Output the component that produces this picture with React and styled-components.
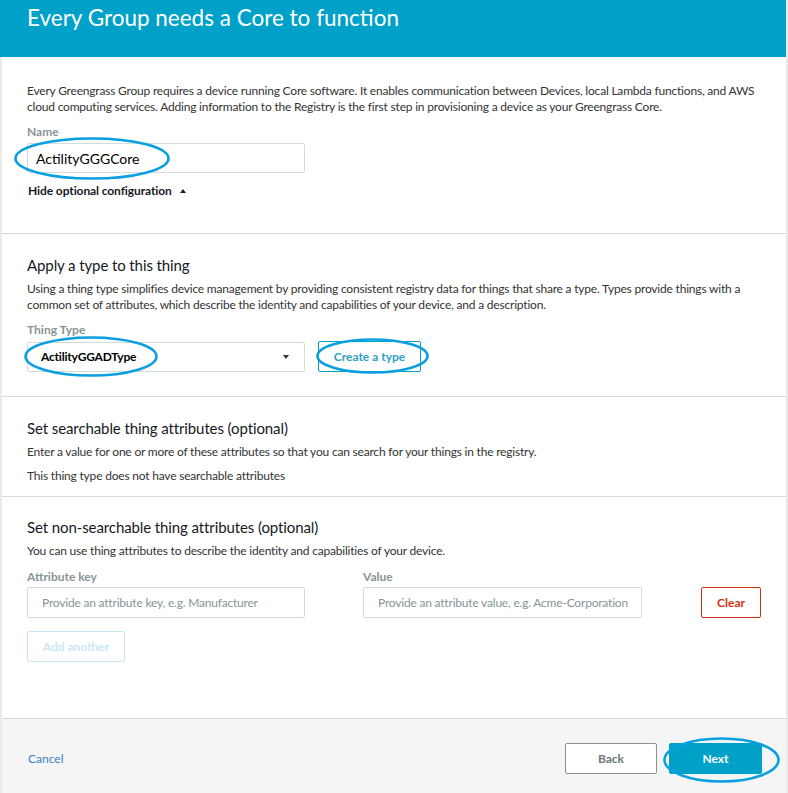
import styled, { createGlobalStyle } from "styled-components";

const GlobalStyle = createGlobalStyle`
  body {
    margin: 0;
    background: #ffffff;
    font-family: Lato, "Open Sans", Arial, sans-serif;
    color: #333333;
  }
  * {
    box-sizing: border-box;
  }
`;

const Page = styled.div`
  width: 788px;
  height: 793px;
  display: flex;
  flex-direction: column;
  border-right: 2px solid #e9ebeb;
  overflow: hidden;
`;

const Header = styled.header`
  height: 57px;
  flex-shrink: 0;
  background: #00a1c9;
  color: #ffffff;
  padding: 4px 0 0 27px;
  font-size: 22.5px;
  line-height: 28px;
`;

const Body = styled.main`
  flex: 1;
  display: flex;
  flex-direction: column;
  border-left: 2px solid #e9ebeb;
`;

const Section = styled.section`
  height: ${(p) => p.$height}px;
  flex-shrink: 0;
  padding: ${(p) => p.$top}px 25px 0 25px;
  border-bottom: 1px solid #d5dbdb;
`;

const Title = styled.h2`
  margin: 0;
  font-size: 15px;
  line-height: 20px;
  font-weight: 400;
  letter-spacing: -0.1px;
  color: #16191f;
`;

const Text = styled.p`
  margin: ${(p) => p.$mt || 0}px 0 0;
  font-size: 12px;
  line-height: 16px;
  letter-spacing: -0.2px;
  color: #333333;
`;

const Label = styled.div`
  margin-top: ${(p) => p.$mt || 0}px;
  font-size: 12px;
  line-height: 16px;
  font-weight: 700;
  color: #879596;
`;

const Field = styled.div`
  position: relative;
  width: ${(p) => p.$width || 278}px;
  height: ${(p) => p.$height || 30}px;
  margin-top: ${(p) => p.$mt || 0}px;
  border: 1px solid #d5dbdb;
  border-radius: 2px;
  background: #ffffff;
  display: flex;
  align-items: center;
  padding-left: ${(p) => p.$pl || 14}px;
  padding-right: 14px;
  font-size: ${(p) => (p.$bold || p.$placeholder ? 12 : 14)}px;
  letter-spacing: ${(p) => (p.$bold || p.$placeholder ? -0.2 : 0)}px;
  font-weight: ${(p) => (p.$bold ? 700 : 400)};
  color: ${(p) => (p.$placeholder ? "#879596" : "#000000")};
  white-space: nowrap;
`;

const Caret = styled.span`
  margin-left: auto;
  width: 0;
  height: 0;
  border-left: 3.5px solid transparent;
  border-right: 3.5px solid transparent;
  border-top: 4px solid #333;
  margin-right: 1px;
`;

const Toggle = styled.div`
  margin-top: 10px;
  display: flex;
  align-items: center;
  gap: 8px;
  font-size: 12px;
  line-height: 16px;
  font-weight: 700;
  letter-spacing: -0.1px;
  color: #16191f;
  padding-left: 1px;
`;

const UpTriangle = styled.span`
  width: 0;
  height: 0;
  border-left: 3.5px solid transparent;
  border-right: 3.5px solid transparent;
  border-bottom: 4px solid #16191f;
`;

const Row = styled.div`
  display: flex;
  align-items: ${(p) => p.$align || "flex-start"};
  gap: ${(p) => p.$gap || 0}px;
  margin-top: ${(p) => p.$mt || 0}px;
`;

const Column = styled.div`
  display: flex;
  flex-direction: column;
  margin-left: ${(p) => p.$ml || 0}px;
`;

const Button = styled.button`
  position: relative;
  width: ${(p) => p.$width}px;
  height: ${(p) => p.$height || 31}px;
  margin-top: ${(p) => p.$mt || 0}px;
  margin-left: ${(p) => p.$ml || 0}px;
  border-radius: 2px;
  font-family: inherit;
  font-size: 12px;
  font-weight: 700;
  padding: 0;
  cursor: pointer;
  border: 1px solid
    ${(p) =>
      ({
        outline: "#00a1c9",
        danger: "#d13212",
        ghost: "#c6e9f3",
        neutral: "#879596",
        primary: "#00a1c9",
      })[p.$variant]};
  background: ${(p) => (p.$variant === "primary" ? "#00a1c9" : "#ffffff")};
  color: ${(p) =>
    ({
      outline: "#2e9fc6",
      danger: "#d13212",
      ghost: "#c9e8f1",
      neutral: "#6c7778",
      primary: "#ffffff",
    })[p.$variant]};
`;

const Footer = styled.footer`
  flex: 1;
  background: #f5f5f5;
  display: flex;
  align-items: flex-start;
  padding: 24px 24px 0 26px;
`;

const CancelLink = styled.a`
  margin-top: 8px;
  font-size: 12px;
  line-height: 16px;
  color: #3b7fc4;
  text-decoration: none;
`;

const FooterButtons = styled.div`
  margin-left: auto;
  display: flex;
  gap: 12px;
`;

const Mark = styled.svg`
  position: absolute;
  left: ${(p) => p.$x}px;
  top: ${(p) => p.$y}px;
  pointer-events: none;
  overflow: visible;
`;

function Ellipse({ x, y, w, h }) {
  return (
    <Mark $x={x} $y={y} width={w} height={h}>
      <ellipse
        cx={w / 2}
        cy={h / 2}
        rx={w / 2 - 1.5}
        ry={h / 2 - 1.5}
        fill="none"
        stroke="#0a9fe0"
        strokeWidth="2.6"
      />
    </Mark>
  );
}

export default function App() {
  return (
    <>
      <GlobalStyle />
      <Page>
        <Header>Every Group needs a Core to function</Header>
        <Body>
          <Section $height={177} $top={26}>
            <Text>
              Every Greengrass Group requires a device running Core software. It
              enables communication between Devices, local Lambda functions, and
              AWS cloud computing services. Adding information to the Registry is
              the first step in provisioning a device as your Greengrass Core.
            </Text>
            <Label $mt={9}>Name</Label>
            <Field $mt={3} $pl={8}>
              ActilityGGGCore
              <Ellipse x={-14} y={-7} w={156} h={43} />
            </Field>
            <Toggle>
              Hide optional configuration
              <UpTriangle />
            </Toggle>
          </Section>

          <Section $height={163} $top={21}>
            <Title>Apply a type to this thing</Title>
            <Text $mt={6}>
              Using a thing type simplifies device management by providing
              consistent registry data for things that share a type. Types
              provide things with a common set of attributes, which describe the
              identity and capabilities of your device, and a description.
            </Text>
            <Label $mt={9}>Thing Type</Label>
            <Row $gap={13} $mt={3} $align="center">
              <Field $pl={13} $bold>
                ActilityGGADType
                <Caret />
                <Ellipse x={-4} y={-7} w={134} h={41} />
              </Field>
              <Button $variant="outline" $width={103}>
                Create a type
                <Ellipse x={-3} y={-4} w={113} h={36} />
              </Button>
            </Row>
          </Section>

          <Section $height={100} $top={21}>
            <Title>Set searchable thing attributes (optional)</Title>
            <Text $mt={6}>
              Enter a value for one or more of these attributes so that you can
              search for your things in the registry.
            </Text>
            <Text $mt={8}>This thing type does not have searchable attributes</Text>
          </Section>

          <Section $height={222} $top={20}>
            <Title>Set non-searchable thing attributes (optional)</Title>
            <Text $mt={6}>
              You can use thing attributes to describe the identity and
              capabilities of your device.
            </Text>
            <Row $mt={10} $align="flex-end">
              <Column>
                <Label>Attribute key</Label>
                <Field $mt={2} $height={31} $placeholder>
                  Provide an attribute key, e.g. Manufacturer
                </Field>
              </Column>
              <Column $ml={58}>
                <Label>Value</Label>
                <Field $mt={2} $width={279} $height={31} $placeholder>
                  Provide an attribute value, e.g. Acme-Corporation
                </Field>
              </Column>
              <Button $variant="danger" $width={60} $ml={59}>
                Clear
              </Button>
            </Row>
            <Button $variant="ghost" $width={98} $mt={13}>
              Add another
            </Button>
          </Section>

          <Footer>
            <CancelLink href="#">Cancel</CancelLink>
            <FooterButtons>
              <Button $variant="neutral" $width={92}>
                Back
              </Button>
              <Button $variant="primary" $width={93}>
                Next
                <Ellipse x={-7} y={-7} w={117} h={46} />
              </Button>
            </FooterButtons>
          </Footer>
        </Body>
      </Page>
    </>
  );
}
